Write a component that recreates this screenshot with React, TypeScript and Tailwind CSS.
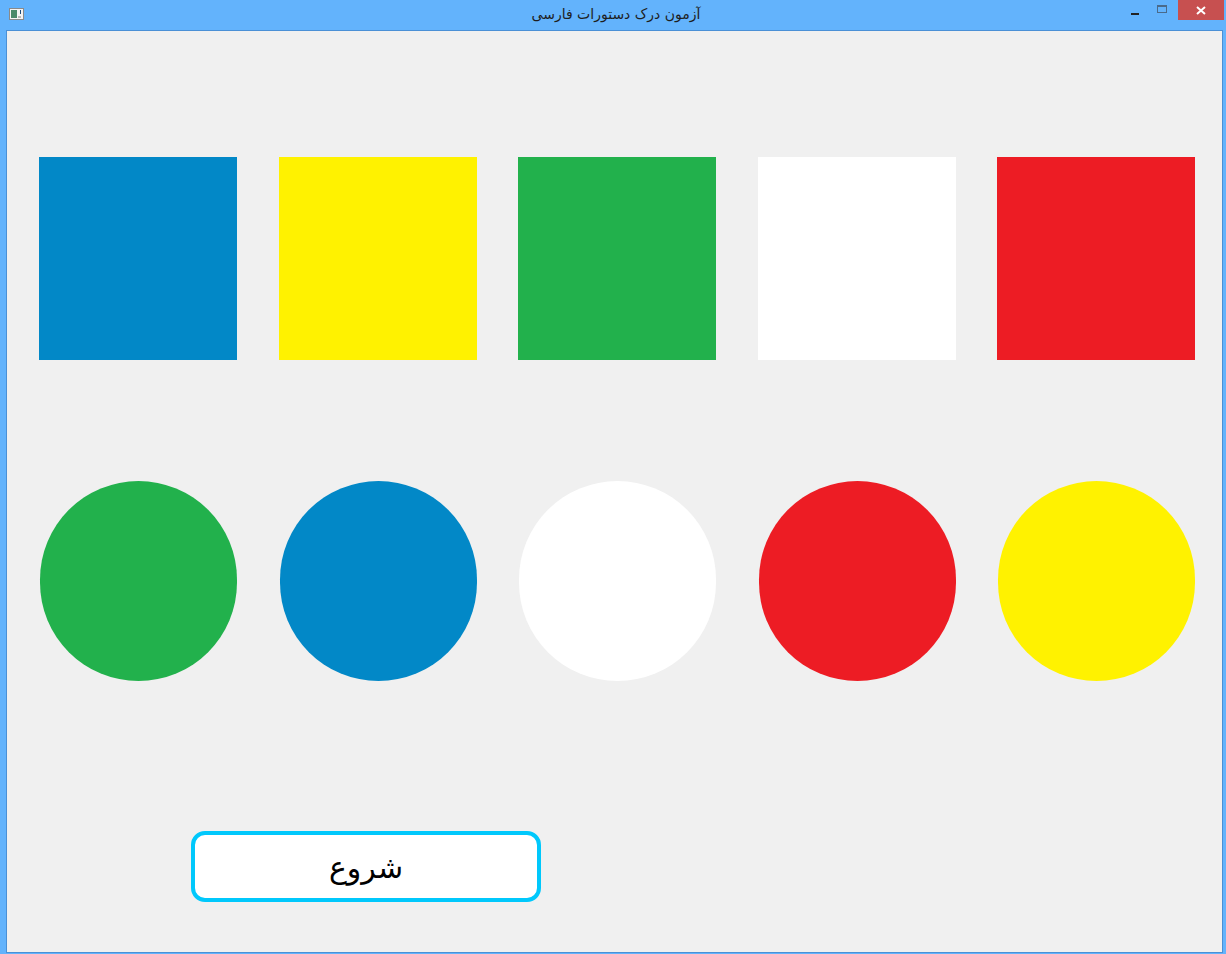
import React from 'react';

const squares = ['bg-[#0288c7]', 'bg-[#fff200]', 'bg-[#22b14c]', 'bg-white', 'bg-[#ed1c24]'];
const circles = ['bg-[#22b14c]', 'bg-[#0288c7]', 'bg-white', 'bg-[#ed1c24]', 'bg-[#fff200]'];

export default function App() {
  return (
    <div className="w-[1226px] h-[954px] bg-[#63b3fc] flex flex-col" style={{ fontFamily: '"DejaVu Sans", sans-serif' }}>
      {/* title bar */}
      <div className="h-[30px] relative flex items-center justify-center shrink-0">
        <svg className="absolute left-[9px] top-[8px]" width="15" height="12" viewBox="0 0 15 12">
          <rect x="0.5" y="0.5" width="14" height="11" fill="#f4f4f4" stroke="#8a8a8a" />
          <rect x="2" y="2" width="6" height="8" fill="#4a8a6a" />
          <rect x="11" y="2" width="1" height="4" fill="#1a4a7a" />
          <rect x="9" y="8" width="3" height="2" fill="#b8b8b8" />
        </svg>
        <span dir="rtl" className="text-[14px] text-[#1e1e1e] -mt-[2px] ml-[6px]">آزمون درک دستورات فارسی</span>
        <div className="absolute right-[2px] top-0 flex items-start">
          <div className="w-[22px] h-[20px] flex items-center justify-center mr-[4px]">
            <div className="w-[8px] h-[2px] bg-[#222] mt-[7px]" />
          </div>
          <div className="w-[24px] h-[20px] flex items-center justify-center mr-[4px]">
            <div className="w-[10px] h-[8px] border border-[#4a6a8a] border-t-2 -mt-[3px]" />
          </div>
          <div className="w-[46px] h-[20px] bg-[#c75050] flex items-center justify-center">
            <svg width="10" height="9" viewBox="0 0 10 9">
              <path d="M1 1 L9 8 M9 1 L1 8" stroke="#fff" strokeWidth="2" />
            </svg>
          </div>
        </div>
      </div>
      {/* client area */}
      <div className="flex-1 ml-[6px] mr-[3px] mb-[1px] border border-[#4a90d6] bg-[#f0f0f0] flex flex-col">
        <div className="flex justify-between pl-[32px] pr-[27px] mt-[126px]">
          {squares.map((c, i) => (
            <div key={i} className={`w-[198px] h-[203px] ${c}`} />
          ))}
        </div>
        <div className="flex justify-between pl-[33px] pr-[27px] mt-[121px]">
          {circles.map((c, i) => (
            <div key={i} className={`w-[197px] h-[200px] rounded-full ${c}`} />
          ))}
        </div>
        <div className="mt-[150px] pl-[184px]">
          <button className="w-[350px] h-[71px] border-4 border-[#00c8fc] rounded-[14px] bg-white flex items-center justify-center text-[30px] text-black">
            <span dir="rtl" className="mt-[2px]">شروع</span>
          </button>
        </div>
      </div>
    </div>
  );
}
